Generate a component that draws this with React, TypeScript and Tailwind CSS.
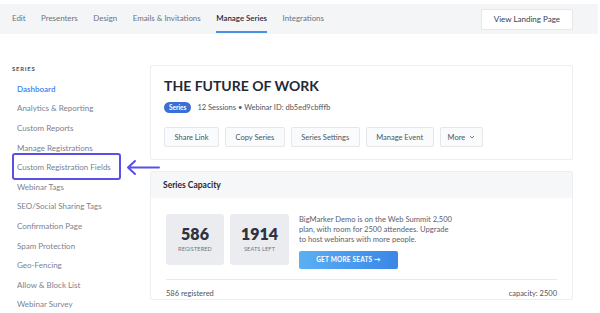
import React from 'react';

const tabs = ['Edit', 'Presenters', 'Design', 'Emails & Invitations', 'Manage Series', 'Integrations'];

const sideItems = [
  'Dashboard',
  'Analytics & Reporting',
  'Custom Reports',
  'Manage Registrations',
  'Custom Registration Fields',
  'Webinar Tags',
  'SEO/Social Sharing Tags',
  'Confirmation Page',
  'Spam Protection',
  'Geo-Fencing',
  'Allow & Block List',
  'Webinar Survey',
];

const actions = ['Share Link', 'Copy Series', 'Series Settings', 'Manage Event'];

export default function App() {
  return (
    <div
      className="relative w-[600px] h-[313px] overflow-hidden bg-white text-[#374151]"
      style={{ fontFamily: 'Lato, "Open Sans", sans-serif' }}
    >
      {/* Top tabs */}
      <div className="mt-[4px] h-[30px] w-[598px] bg-[#f4f5f7] flex items-center pl-[12px] pr-[25px]">
        <div className="flex h-full items-center gap-[15.5px]">
          {tabs.map((t) => (
            <div
              key={t}
              className={`relative h-full flex items-center text-[7.9px] ${
                t === 'Manage Series' ? 'text-[#1f2937] font-semibold' : 'text-[#6b7280]'
              }`}
            >
              {t}
              {t === 'Manage Series' && (
                <div className="absolute left-0 right-0 bottom-[1px] h-[2px] bg-[#4a90e2]" />
              )}
            </div>
          ))}
        </div>
        <div className="ml-auto h-[21px] px-[12px] bg-white border border-[#e5e7eb] rounded-[2px] flex items-center text-[8px] text-[#374151]">
          View Landing Page
        </div>
      </div>

      <div className="flex">
        {/* Sidebar */}
        <div className="w-[150px] shrink-0 pl-[12px] pt-[31px]">
          <div className="text-[6px] font-bold tracking-[0.12em] text-[#4b5563] leading-[8px]">SERIES</div>
          <div className="mt-[6px] pl-[5px]">
            {sideItems.map((s, i) => (
              <div
                key={s}
                className={`h-[19.6px] flex items-center text-[8px] whitespace-nowrap ${
                  i === 0 ? 'text-[#3b82f6] font-semibold' : 'text-[#7b8190]'
                }`}
              >
                {s}
              </div>
            ))}
          </div>
        </div>

        {/* Main */}
        <div className="w-[423px] pt-[31px]">
          <div className="border border-[#eceef1] rounded-[2px] h-[95px] pl-[13px] pt-[10px]">
            <div className="text-[14px] font-bold text-[#1f2937] leading-[20px]">
              THE FUTURE OF WORK
            </div>
            <div className="mt-[6px] flex items-center gap-[6px]">
              <span className="h-[11px] px-[5px] rounded-full bg-[#3b6fd8] text-white text-[6.5px] font-bold flex items-center">
                Series
              </span>
              <span className="text-[7.5px] text-[#4b5563]">12 Sessions • Webinar ID: db5ed9cbfffb</span>
            </div>
            <div className="mt-[14px] flex gap-[6px]">
              {actions.map((a) => (
                <div
                  key={a}
                  className="h-[20px] px-[9.5px] border border-[#e5e7eb] bg-[#fafbfc] rounded-[2px] flex items-center text-[7.5px] text-[#4b5563]"
                >
                  {a}
                </div>
              ))}
              <div className="h-[20px] px-[7px] border border-[#e5e7eb] bg-[#fafbfc] rounded-[2px] flex items-center gap-[4px] text-[7.5px] text-[#4b5563]">
                More
                <svg width="6" height="4" viewBox="0 0 6 4" fill="none">
                  <path d="M1 1l2 2 2-2" stroke="#6b7280" strokeWidth="0.9" />
                </svg>
              </div>
            </div>
          </div>

          <div className="mt-[11px] border border-[#eceef1] rounded-[2px]">
            <div className="h-[26px] bg-[#f6f7f9] flex items-center pl-[12px] text-[8.5px] font-bold text-[#1f2937]">
              Series Capacity
            </div>
            <div className="px-[15px] pt-[16px]">
              <div className="flex">
                <div className="w-[58px] h-[51px] rounded-[3px] bg-[#ebecf0] flex flex-col items-center justify-center">
                  <div className="text-[16px] font-extrabold text-[#2d3340] leading-[18px]">586</div>
                  <div className="text-[5.5px] text-[#6b7280] tracking-[0.03em] mt-[2px]">REGISTERED</div>
                </div>
                <div className="ml-[6px] w-[59px] h-[51px] rounded-[3px] bg-[#ebecf0] flex flex-col items-center justify-center">
                  <div className="text-[16px] font-extrabold text-[#2d3340] leading-[18px]">1914</div>
                  <div className="text-[5.5px] text-[#6b7280] tracking-[0.03em] mt-[2px]">SEATS LEFT</div>
                </div>
                <div className="ml-[10px] w-[170px]">
                  <p className="text-[7.6px] leading-[10px] text-[#5b6070] whitespace-nowrap">
                    BigMarker Demo is on the Web Summit 2,500
                    <br />
                    plan, with room for 2500 attendees. Upgrade
                    <br />
                    to host webinars with more people.
                  </p>
                  <div className="mt-[7px] w-[99px] h-[18px] rounded-[2px] bg-gradient-to-r from-[#5bb0f2] to-[#3b86e8] flex items-center justify-center text-white text-[6.5px] font-bold tracking-[0.03em]">
                    GET MORE SEATS →
                  </div>
                </div>
              </div>
              <div className="mt-[10px] border-t border-[#e8eaed] flex justify-between pt-[8px] text-[7.5px] text-[#4b5563]">
                <span>586 registered</span>
                <span>capacity: 2500</span>
              </div>
            </div>
          </div>
        </div>
      </div>

      {/* Annotation */}
      <div className="absolute left-[12px] top-[153px] w-[109px] h-[27px] border-2 border-[#5b50e6] rounded-[3px]" />
      <svg className="absolute left-[125px] top-[159px]" width="36" height="17" viewBox="0 0 36 17" fill="none">
        <path d="M34 8.5H3M10 2L3 8.5L10 15" stroke="#5b50e6" strokeWidth="2" strokeLinecap="round" strokeLinejoin="round" />
      </svg>
    </div>
  );
}
